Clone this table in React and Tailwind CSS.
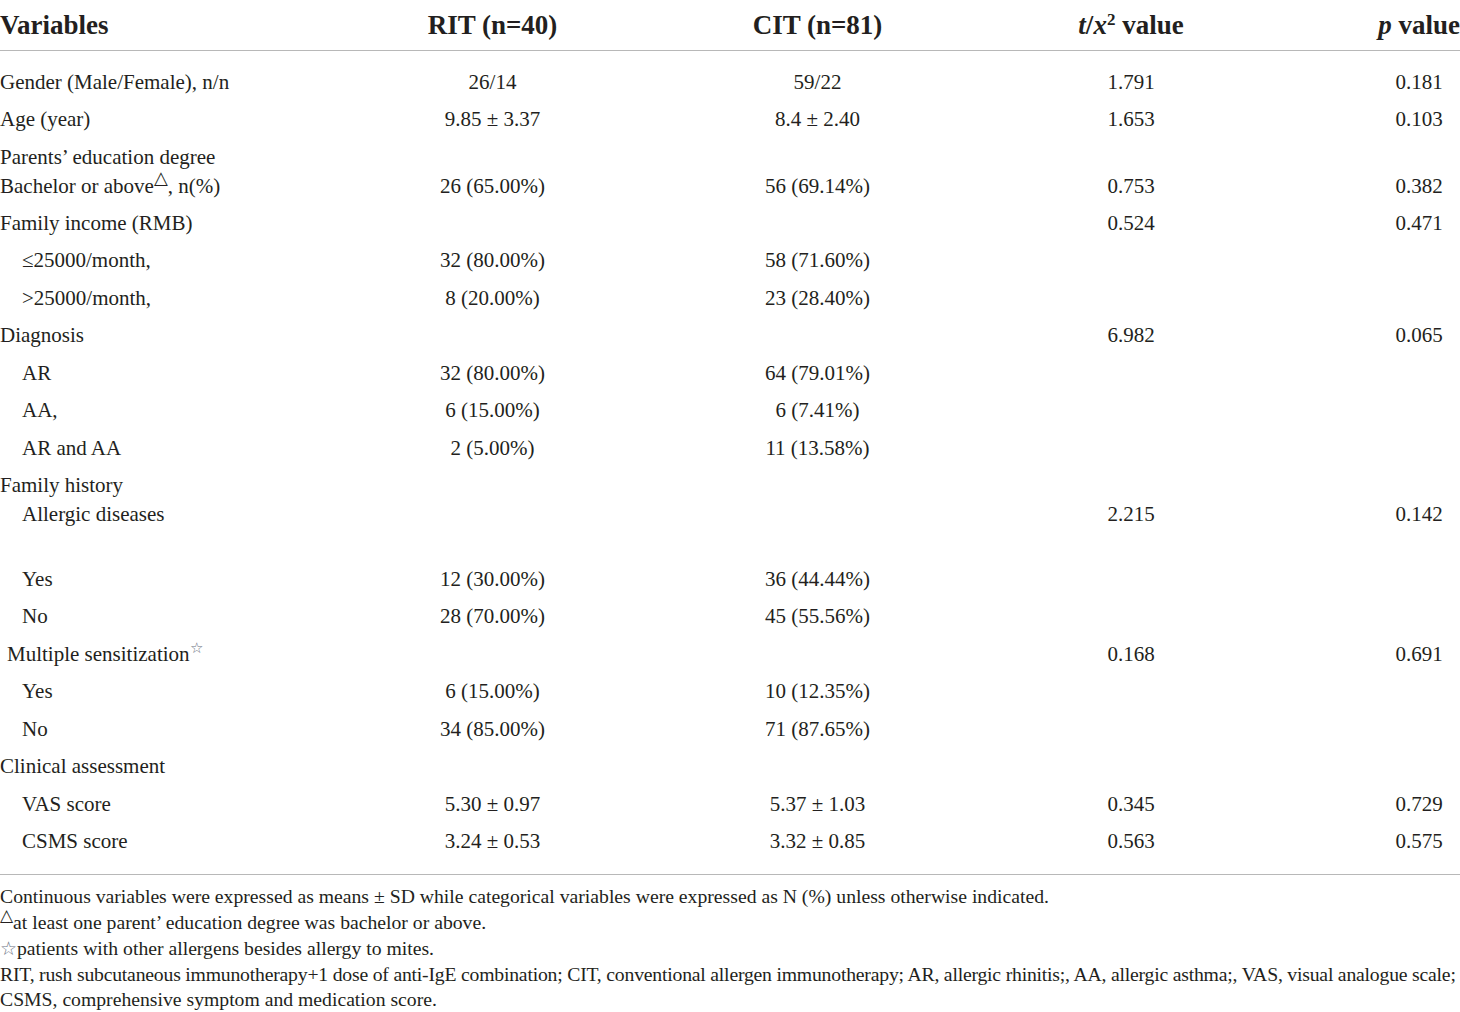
const rows = [
  { label: "Gender (Male/Female), n/n", rit: "26/14", cit: "59/22", t: "1.791", p: "0.181" },
  { label: "Age (year)", rit: "9.85 ± 3.37", cit: "8.4 ± 2.40", t: "1.653", p: "0.103" },
  {
    label: "Parents’ education degree",
    sub: (
      <>
        Bachelor or above<sup className="text-[18px]">△</sup>, n(%)
      </>
    ),
    rit: "26 (65.00%)",
    cit: "56 (69.14%)",
    t: "0.753",
    p: "0.382",
    kind: "two",
  },
  { label: "Family income (RMB)", t: "0.524", p: "0.471" },
  { label: "≤25000/month,", indent: true, rit: "32 (80.00%)", cit: "58 (71.60%)" },
  { label: ">25000/month,", indent: true, rit: "8 (20.00%)", cit: "23 (28.40%)" },
  { label: "Diagnosis", t: "6.982", p: "0.065" },
  { label: "AR", indent: true, rit: "32 (80.00%)", cit: "64 (79.01%)" },
  { label: "AA,", indent: true, rit: "6 (15.00%)", cit: "6 (7.41%)" },
  { label: "AR and AA", indent: true, rit: "2 (5.00%)", cit: "11 (13.58%)" },
  { label: "Family history", sub: "Allergic diseases", t: "2.215", p: "0.142", kind: "three" },
  { label: "Yes", indent: true, rit: "12 (30.00%)", cit: "36 (44.44%)" },
  { label: "No", indent: true, rit: "28 (70.00%)", cit: "45 (55.56%)" },
  {
    label: (
      <span className="pl-[7px]">
        Multiple sensitization<sup className="text-[15px] text-gray-500">☆</sup>
      </span>
    ),
    t: "0.168",
    p: "0.691",
  },
  { label: "Yes", indent: true, rit: "6 (15.00%)", cit: "10 (12.35%)" },
  { label: "No", indent: true, rit: "34 (85.00%)", cit: "71 (87.65%)" },
  { label: "Clinical assessment" },
  { label: "VAS score", indent: true, rit: "5.30 ± 0.97", cit: "5.37 ± 1.03", t: "0.345", p: "0.729" },
  { label: "CSMS score", indent: true, rit: "3.24 ± 0.53", cit: "3.32 ± 0.85", t: "0.563", p: "0.575" },
];

const grid = "grid grid-cols-[330px_325px_325px_302px_96px_82px]";

function Row({ r }) {
  if (r.kind === "two") {
    return (
      <div className={`${grid} leading-[29px] pt-[4.5px] pb-[3.75px]`}>
        <div>
          <div>{r.label}</div>
          <div>{r.sub}</div>
        </div>
        <div className="text-center pt-[29px]">{r.rit}</div>
        <div className="text-center pt-[29px]">{r.cit}</div>
        <div className="text-center pt-[29px]">{r.t}</div>
        <div />
        <div className="text-center pt-[29px]">{r.p}</div>
      </div>
    );
  }
  if (r.kind === "three") {
    return (
      <div className={`${grid} leading-[29px] pt-[3.75px] pb-[2.75px]`}>
        <div>
          <div>{r.label}</div>
          <div className="pl-[22px]">{r.sub}</div>
          <div>&nbsp;</div>
        </div>
        <div />
        <div />
        <div className="text-center pt-[29px]">{r.t}</div>
        <div />
        <div className="text-center pt-[29px]">{r.p}</div>
      </div>
    );
  }
  return (
    <div className={`${grid} h-[37.5px] items-center`}>
      <div className={r.indent ? "pl-[22px]" : ""}>{r.label}</div>
      <div className="text-center">{r.rit}</div>
      <div className="text-center">{r.cit}</div>
      <div className="text-center">{r.t}</div>
      <div />
      <div className="text-center">{r.p}</div>
    </div>
  );
}

export default function App() {
  return (
    <div
      className="w-[1460px] h-[1012px] bg-white text-[#231f20] overflow-hidden"
      style={{ fontFamily: '"Liberation Serif", "DejaVu Serif", serif' }}
    >
      <div className={`${grid} h-[50px] items-center text-[27px] font-bold whitespace-nowrap`}>
        <div>Variables</div>
        <div className="text-center">RIT (n=40)</div>
        <div className="text-center">CIT (n=81)</div>
        <div className="text-center">
          <i>t</i>/<i>x</i>
          <sup className="text-[17px]">2</sup> value
        </div>
        <div />
        <div className="text-right">
          <i>p</i> value
        </div>
      </div>
      <div className="border-t border-[#b8b8b8] pt-[12.5px] pb-[13.5px] text-[21px] whitespace-nowrap">
        {rows.map((r, i) => (
          <Row key={i} r={r} />
        ))}
      </div>
      <div className="border-t border-[#b8b8b8] pt-[9px] text-[19.7px] leading-[25.75px] whitespace-nowrap">
        <div>
          Continuous variables were expressed as means ± SD while categorical variables were expressed as N (%) unless otherwise indicated.
        </div>
        <div>
          <sup className="text-[17px]">△</sup>at least one parent’ education degree was bachelor or above.
        </div>
        <div>
          <span className="text-[19px] text-gray-500">☆</span>patients with other allergens besides allergy to mites.
        </div>
        <div className="tracking-[-0.2px]">
          RIT, rush subcutaneous immunotherapy+1 dose of anti-IgE combination; CIT, conventional allergen immunotherapy; AR, allergic rhinitis;, AA, allergic asthma;, VAS, visual analogue scale;
        </div>
        <div>CSMS, comprehensive symptom and medication score.</div>
      </div>
    </div>
  );
}
